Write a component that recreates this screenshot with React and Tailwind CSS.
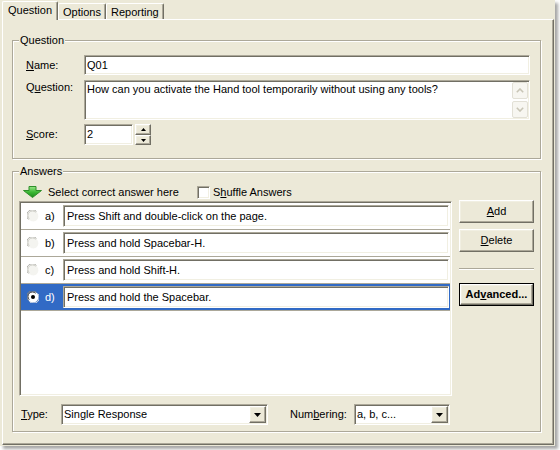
import React from "react";

const FIELD =
  "bg-white border border-t-[#ACA899] border-l-[#ACA899] border-r-white border-b-white shadow-[inset_1px_1px_0_#716F64,inset_-1px_-1px_0_#F1EFE2]";
const RAISED =
  "bg-[#ECE9D8] border border-t-white border-l-white border-r-[#716F64] border-b-[#716F64] shadow-[inset_-1px_-1px_0_#ACA899,inset_1px_1px_0_#F1EFE2]";

function U({ children }) {
  return <span className="underline underline-offset-[1px]">{children}</span>;
}

function Group({ title, className, children }) {
  return (
    <fieldset
      className={
        "border border-[#ACA899] shadow-[1px_1px_0_#ffffff,inset_1px_1px_0_#ffffff] " +
        className
      }
    >
      <legend className="ml-[6px] px-[1px] leading-[13px] bg-[#ECE9D8]">{title}</legend>
      {children}
    </fieldset>
  );
}

function ScrollBtn({ up }) {
  return (
    <div className="h-[17px] w-[16px] rounded-[2px] border border-[#E2E0D6] bg-[#F7F6F1] flex items-center justify-center">
      <svg width="8" height="5" viewBox="0 0 8 5">
        <path
          d={up ? "M0.8 4.2L4 1L7.2 4.2" : "M0.8 0.8L4 4L7.2 0.8"}
          stroke="#C8C5B6"
          strokeWidth="1.6"
          fill="none"
        />
      </svg>
    </div>
  );
}

function Combo({ className, text }) {
  return (
    <div className={FIELD + " h-[21px] flex items-stretch p-[1px] " + className}>
      <div className="flex-1 flex items-center pl-[1px]">{text}</div>
      <div className={RAISED + " w-[17px] flex items-center justify-center"}>
        <svg width="7" height="4" viewBox="0 0 7 4">
          <path d="M0 0H7L3.5 4Z" fill="#000" />
        </svg>
      </div>
    </div>
  );
}

function Radio({ checked }) {
  if (checked) {
    return (
      <svg width="12" height="12" viewBox="0 0 12 12" className="ml-[6px] shrink-0">
        <circle cx="6" cy="6" r="5.5" fill="#ffffff" />
        <path d="M1.4 9.4A5.5 5.5 0 0 1 9.4 1.4" stroke="#808080" strokeWidth="1" fill="none" />
        <path d="M2.3 8.6A4.4 4.4 0 0 1 8.6 2.3" stroke="#404040" strokeWidth="1" fill="none" />
        <path d="M10.6 2.6A5.5 5.5 0 0 1 2.6 10.6" stroke="#e8e8e8" strokeWidth="1" fill="none" />
        <circle cx="6" cy="6" r="2" fill="#000" />
      </svg>
    );
  }
  return (
    <svg width="12" height="12" viewBox="0 0 12 12" className="ml-[6px] shrink-0">
      <circle cx="6" cy="6" r="5.5" fill="#F4F4F0" />
      <path d="M1.4 9.4A5.5 5.5 0 0 1 9.4 1.4" stroke="#A9A9A2" strokeWidth="1" fill="none" />
      <path d="M2.3 8.6A4.4 4.4 0 0 1 8.6 2.3" stroke="#CFCFC8" strokeWidth="1" fill="none" />
      <path d="M10.6 2.6A5.5 5.5 0 0 1 2.6 10.6" stroke="#ffffff" strokeWidth="1" fill="none" />
    </svg>
  );
}

const answers = [
  ["a)", "Press Shift and double-click on the page."],
  ["b)", "Press and hold Spacebar-H."],
  ["c)", "Press and hold Shift-H."],
  ["d)", "Press and hold the Spacebar."],
];

export default function App() {
  return (
    <div className="w-[560px] h-[450px] bg-white font-['Liberation_Sans',Arial,sans-serif] text-[11px] leading-[13px] text-black">
      <div className="w-[555px] h-[446px] bg-[#ECE9D8] shadow-[3px_3px_3px_rgba(0,0,0,0.35)] flex flex-col pl-[2px] pr-[1px] pt-[1px] pb-[1px]">
        {/* Tabs */}
        <div className="flex items-end h-[18px]">
          <div className="relative z-10 h-[19px] -mb-[1px] px-[5px] pt-[2px] bg-[#ECE9D8] border-l border-t border-r border-l-white border-t-white border-r-[#716F64] rounded-t-[2px] shadow-[inset_-1px_0_0_#ACA899]">
            Question
          </div>
          <div className="h-[16px] px-[4px] pt-[2px] border-l border-t border-r border-l-white border-t-white border-r-[#716F64] rounded-t-[2px] shadow-[inset_-1px_0_0_#ACA899]">
            Options
          </div>
          <div className="h-[16px] px-[4px] pt-[2px] border-l border-t border-r border-l-white border-t-white border-r-[#716F64] rounded-t-[2px] shadow-[inset_-1px_0_0_#ACA899]">
            Reporting
          </div>
        </div>

        {/* Panel */}
        <div className="flex-1 flex flex-col border border-t-white border-l-white border-r-[#716F64] border-b-[#716F64] shadow-[inset_-1px_-1px_0_#ACA899]">
          <Group title="Question" className="ml-[9px] w-[529px] mt-[14px]">
            <div className="pt-[8px] pl-[13px] pr-[10px] pb-[13px] flex flex-col">
              <div className="flex items-center h-[20px]">
                <div className="w-[58px]">
                  <U>N</U>ame:
                </div>
                <div className={FIELD + " w-[446px] h-[20px] flex items-center pl-[2px]"}>Q01</div>
              </div>
              <div className="flex items-start mt-[5px]">
                <div className="w-[58px] pt-[1px]">
                  Q<U>u</U>estion:
                </div>
                <div className={FIELD + " w-[446px] h-[40px] flex"}>
                  <div className="flex-1 pl-[2px] pt-[2px]">
                    How can you activate the Hand tool temporarily without using any tools?
                  </div>
                  <div className="w-[17px] flex flex-col gap-[2px] pt-[1px] pr-[1px]">
                    <ScrollBtn up />
                    <ScrollBtn />
                  </div>
                </div>
              </div>
              <div className="flex items-center mt-[4px]">
                <div className="w-[58px]">
                  <U>S</U>core:
                </div>
                <div className={FIELD + " w-[49px] h-[21px] flex items-center pl-[2px]"}>2</div>
                <div className="ml-[2px] flex flex-col">
                  <div className={RAISED + " w-[16px] h-[11px] flex items-center justify-center"}>
                    <svg width="5" height="3" viewBox="0 0 5 3">
                      <path d="M2.5 0L5 3H0Z" fill="#000" />
                    </svg>
                  </div>
                  <div className={RAISED + " w-[16px] h-[10px] flex items-center justify-center"}>
                    <svg width="5" height="3" viewBox="0 0 5 3">
                      <path d="M0 0H5L2.5 3Z" fill="#000" />
                    </svg>
                  </div>
                </div>
              </div>
            </div>
          </Group>

          <Group title="Answers" className="ml-[9px] w-[529px] mt-[6px]">
            <div className="pt-[7px] pl-[6px] pr-[6px] pb-[6px] flex flex-col">
              <div className="flex items-center h-[14px]">
                <div className="w-[178px] flex items-center pl-[4px]">
                  <svg width="19" height="12" viewBox="0 0 19 12">
                    <defs>
                      <linearGradient id="ga" x1="0" y1="0" x2="0" y2="1">
                        <stop offset="0" stopColor="#9BE58A" />
                        <stop offset="0.5" stopColor="#3DBA36" />
                        <stop offset="1" stopColor="#1C8A1C" />
                      </linearGradient>
                    </defs>
                    <path
                      d="M6 0.5H13V4.5H18.5L9.5 11.5L0.5 4.5H6Z"
                      fill="url(#ga)"
                      stroke="#2F8F2A"
                      strokeWidth="1"
                      strokeLinejoin="round"
                    />
                  </svg>
                  <span className="ml-[6px]">Select correct answer here</span>
                </div>
                <div className={FIELD + " w-[13px] h-[13px]"} />
                <span className="ml-[3px]">
                  S<U>h</U>uffle Answers
                </span>
              </div>

              <div className="flex items-start mt-[1px]">
                <div className={FIELD + " mt-[1px] w-[433px] h-[195px] p-[1px] flex flex-col"}>
                  {answers.map(([l, t], i) => {
                    const sel = i === 3;
                    return (
                      <div
                        key={l}
                        className={
                          "h-[27px] shrink-0 flex items-center border-b border-[#ACA899] " +
                          (sel ? "bg-[#316AC5] text-white" : "bg-white")
                        }
                      >
                        <Radio checked={sel} />
                        <span className="ml-[6px] w-[18px]">{l}</span>
                        <div className={FIELD + " w-[386px] h-[22px] flex items-center pl-[3px] text-black"}>{t}</div>
                      </div>
                    );
                  })}
                </div>
                <div className="ml-[7px] w-[75px] flex flex-col">
                  <div className={RAISED + " h-[23px] flex items-center justify-center"}>
                    <span>
                      <U>A</U>dd
                    </span>
                  </div>
                  <div className={RAISED + " mt-[6px] h-[23px] flex items-center justify-center"}>
                    <span>
                      <U>D</U>elete
                    </span>
                  </div>
                  <div className="mt-[16px] h-[2px] border-t border-t-[#ACA899] border-b border-b-white" />
                  <div className="mt-[13px] h-[23px] border border-black flex">
                    <div className={RAISED + " flex-1 flex items-center justify-center font-bold"}>
                      <span>
                        Ad<U>v</U>anced...
                      </span>
                    </div>
                  </div>
                </div>
              </div>

              <div className="flex items-center mt-[8px] pl-[2px]">
                <div className="w-[40px]">
                  <U>T</U>ype:
                </div>
                <Combo className="w-[207px]" text="Single Response" />
                <div className="ml-[22px] w-[64px]">
                  Num<U>b</U>ering:
                </div>
                <Combo className="w-[96px]" text="a, b, c..." />
              </div>
            </div>
          </Group>
        </div>
      </div>
    </div>
  );
}
